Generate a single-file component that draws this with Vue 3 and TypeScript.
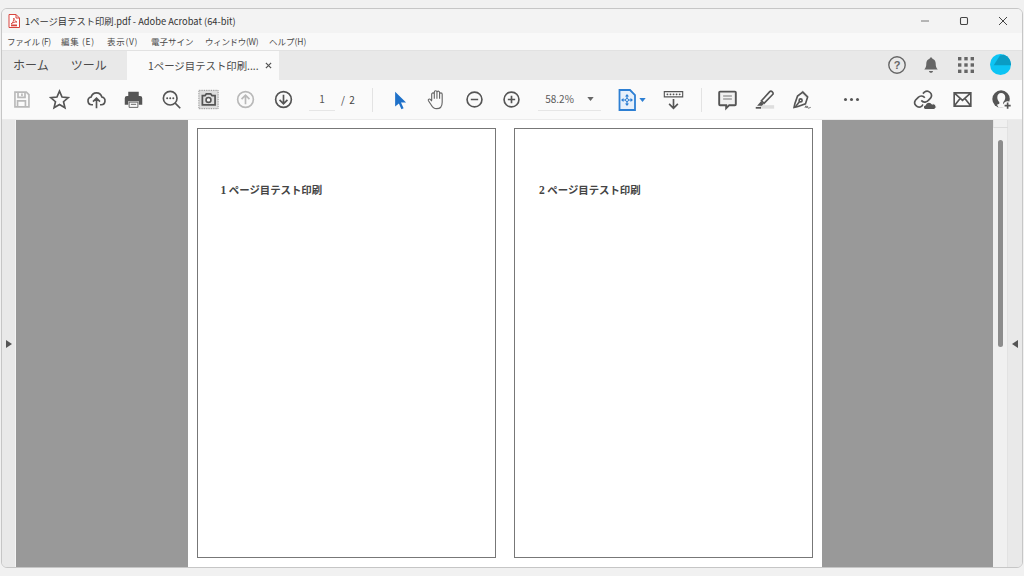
<script setup lang="ts">
const menus: { label: string; width: number; spacing: number }[] = [
  { label: 'ファイル (F)', width: 54, spacing: -0.3 },
  { label: '編集 (E)', width: 46, spacing: 0.7 },
  { label: '表示(V)', width: 44, spacing: 0.7 },
  { label: '電子サイン', width: 54, spacing: 0 },
  { label: 'ウィンドウ(W)', width: 64, spacing: -0.3 },
  { label: 'ヘルプ(H)', width: 50, spacing: 0 },
]
const pages: { n: number; label: string }[] = [
  { n: 1, label: 'ページ目テスト印刷' },
  { n: 2, label: 'ページ目テスト印刷' },
]
</script>

<template>
  <div class="window">
    <header class="titlebar">
      <svg class="pdf" viewBox="0 0 12 14" width="12" height="14">
        <path d="M1 .5h7l3.500 3.500v9.500H1z" fill="#fff" stroke="#d8453e" />
        <path d="M8 .5V4h3.500" fill="none" stroke="#d8453e" />
        <path d="M3 10c2-1 3-4 2.800-6 .4 2 1.400 3.500 3.200 4-2-.2-4 .5-6 2z" fill="none" stroke="#d8453e" stroke-width=".9" />
        <rect x="3" y="10.500" width="6" height="1.800" fill="#d8453e" />
      </svg>
      <span class="title">1ページ目テスト印刷.pdf - Adobe Acrobat (64-bit)</span>
      <div class="winbtns">
        <svg viewBox="0 0 10 10" width="10" height="10"><path d="M1 5h8" stroke="#777" stroke-width="1" /></svg>
        <svg viewBox="0 0 10 10" width="10" height="10"><rect x="1.500" y="1.500" width="7" height="7" rx="1.200" fill="none" stroke="#444" stroke-width="1.100" /></svg>
        <svg viewBox="0 0 10 10" width="10" height="10"><path d="M1 1l8 8M9 1l-8 8" stroke="#444" stroke-width="1" /></svg>
      </div>
    </header>

    <nav class="menubar">
      <span v-for="m in menus" :key="m.label" :style="{ width: m.width + 'px', letterSpacing: m.spacing + 'px' }">{{ m.label }}</span>
    </nav>

    <div class="tabbar">
      <span class="tab-plain tab-home">ホーム</span>
      <span class="tab-plain tab-tools">ツール</span>
      <div class="tab-doc">
        <span>1ページ目テスト印刷....</span>
        <svg viewBox="0 0 8 8" width="7" height="7"><path d="M1 1l6 6M7 1l-6 6" stroke="#555" stroke-width="1.400" /></svg>
      </div>
      <div class="tab-right">
        <span class="tr-item">
          <svg viewBox="0 0 20 20" width="20" height="20">
            <circle cx="10" cy="10" r="8.200" fill="none" stroke="#666" stroke-width="1.400" />
            <text x="10" y="14" text-anchor="middle" class="q">?</text>
          </svg>
        </span>
        <span class="tr-item">
          <svg viewBox="0 0 20 20" width="20" height="20">
            <path d="M10 2.500c.8 0 1.300.5 1.400 1.200 2.200.6 3.300 2.500 3.300 4.800 0 3 .6 4.500 2 6H3.300c1.400-1.500 2-3 2-6 0-2.300 1.100-4.200 3.300-4.800.1-.7.600-1.200 1.400-1.200z" fill="#666" />
            <path d="M8 16h4c0 1-.9 1.800-2 1.800S8 17 8 16z" fill="#666" />
          </svg>
        </span>
        <span class="tr-item">
          <svg viewBox="0 0 18 18" width="18" height="18" fill="#666">
            <rect x="1" y="1" width="3.400" height="3.400" /><rect x="7.300" y="1" width="3.400" height="3.400" /><rect x="13.600" y="1" width="3.400" height="3.400" />
            <rect x="1" y="7.300" width="3.400" height="3.400" /><rect x="7.300" y="7.300" width="3.400" height="3.400" /><rect x="13.600" y="7.300" width="3.400" height="3.400" />
            <rect x="1" y="13.600" width="3.400" height="3.400" /><rect x="7.300" y="13.600" width="3.400" height="3.400" /><rect x="13.600" y="13.600" width="3.400" height="3.400" />
          </svg>
        </span>
        <span class="tr-item">
          <svg viewBox="0 0 20 20" width="21" height="21">
            <circle cx="10" cy="10" r="10" fill="#0cc4f4" />
            <path d="M9.500 1.500L13 .6A10 10 0 0 1 20 10.700H3.500z" fill="#0a9cc4" />
          </svg>
        </span>
      </div>
    </div>

    <div class="toolbar">
      <span class="ti dis">
        <svg viewBox="0 0 24 24"><path d="M4.500 3.500h13l3 3v14h-16z M8 3.500v6h8v-6 M7.500 20.500v-7h9v7 M12.500 5v3" /></svg>
      </span>
      <span class="ti">
        <svg viewBox="0 0 24 24"><path d="M12 2.500l2.900 6.600 7.100.7-5.400 4.700 1.600 7-6.200-3.700-6.200 3.700 1.600-7L2 9.800l7.100-.7z" /></svg>
      </span>
      <span class="ti">
        <svg viewBox="0 0 24 24"><path d="M8 18H6.500a4.500 4.500 0 0 1-.6-8.900 6.300 6.300 0 0 1 12.200 0 4.500 4.500 0 0 1-.6 8.900H16 M12 22V11 M8 14.500l4-4 4 4" /></svg>
      </span>
      <span class="ti">
        <svg viewBox="0 0 24 24">
          <path class="fill" d="M6 3h12v5H6z" />
          <path class="fill" d="M4.500 8h15A2.500 2.500 0 0 1 22 10.500V18h-4v-4H6v4H2v-7.500A2.500 2.500 0 0 1 4.500 8z" />
          <path class="thin" d="M7 15h10v6H7z M9 17.500h6" />
        </svg>
      </span>
      <span class="ti">
        <svg viewBox="0 0 24 24">
          <circle cx="10.500" cy="10.500" r="7.800" />
          <path d="M16.200 16.200L22 22" />
          <path class="dots" d="M7 10.500h.1M10.500 10.500h.1M14 10.500h.1" />
        </svg>
      </span>
      <span class="ti">
        <svg viewBox="0 0 24 24">
          <rect class="dash" x="1" y="1.500" width="22" height="21" />
          <path class="camera" d="M5 7.500h3l1.500-1.800h5L16 7.500h3.500v10.500H5z" />
          <circle class="lens" cx="12" cy="12.500" r="2.800" />
        </svg>
      </span>
      <span class="ti dis">
        <svg viewBox="0 0 24 24"><circle cx="12" cy="12" r="9" /><path d="M12 17.500V7 M7.500 11.500L12 7l4.500 4.500" /></svg>
      </span>
      <span class="ti">
        <svg viewBox="0 0 24 24"><circle cx="12" cy="12" r="9" /><path d="M12 6.500V17 M7.500 12.500L12 17l4.500-4.500" /></svg>
      </span>

      <div class="pager">
        <span class="page-no">1</span>
        <span class="page-of">/&nbsp; 2</span>
      </div>
      <i class="sep sep-a"></i>

      <span class="ti ti-first">
        <svg viewBox="0 0 24 24"><path class="blue" d="M7 3l12.500 12.500h-5.800l3 6.500-2.500 1-2.900-6.500L7 20z" /></svg>
      </span>
      <span class="ti ti-hand">
        <svg viewBox="0 0 24 24"><path d="M6.500 13V6a1.500 1.500 0 0 1 3 0v5 M9.500 11V3.500a1.500 1.500 0 0 1 3 0V11 M12.500 11V4a1.500 1.500 0 0 1 3 0v7 M15.500 11V6a1.500 1.500 0 0 1 3 0v9c0 4.500-2.500 7.500-6.500 7.500-3.200 0-4.800-2-6-4.300L2.800 13.500c-.8-1.500 1.200-2.800 2.300-1.500l1.400 2" /></svg>
      </span>
      <span class="ti">
        <svg viewBox="0 0 24 24"><circle cx="12" cy="12" r="8.500" /><path d="M7.800 12h8.400" /></svg>
      </span>
      <span class="ti">
        <svg viewBox="0 0 24 24"><circle cx="12" cy="12" r="8.500" /><path d="M7.800 12h8.400 M12 7.800v8.400" /></svg>
      </span>

      <div class="zoom">
        <span>58.2%</span>
        <svg viewBox="0 0 8 5" width="7" height="4"><path d="M0 0h8L4 5z" fill="#666" /></svg>
      </div>

      <span class="fit">
        <svg viewBox="0 0 24 24" width="24" height="24">
          <path d="M4.500 2h10.500l5 5v15H4.500z" fill="#e6f0fb" stroke="#2d7fd3" stroke-width="1.800" />
          <path d="M12 7v10M7 12h10" stroke="#2d7fd3" stroke-width="1.200" />
          <path d="M12 6l-2 2.500h4zM12 18l-2-2.500h4zM6 12l2.500-2v4zM18 12l-2.500-2v4z" fill="#2d7fd3" />
          <circle cx="12" cy="12" r="1.500" fill="#fff" stroke="#2d7fd3" />
        </svg>
        <svg viewBox="0 0 8 5" width="7" height="4"><path d="M0 0h8L4 5z" fill="#2d7fd3" /></svg>
      </span>

      <span class="ti ti-scan">
        <svg viewBox="0 0 24 24">
          <path class="band" d="M1.500 3h21v6h-21z" />
          <path class="dots2" d="M5 6h.1M8.500 6h.1M12 6h.1M15.500 6h.1M19 6h.1" />
          <path d="M12 11.500V22 M7 17l5 5 5-5" />
        </svg>
      </span>
      <i class="sep sep-b"></i>

      <span class="ti ti-comment">
        <svg viewBox="0 0 24 24"><path class="bubble" d="M3.500 3h17a1 1 0 0 1 1 1v13.500a1 1 0 0 1-1 1H14l-3.500 3.500v-3.500h-7a1 1 0 0 1-1-1V4a1 1 0 0 1 1-1z" /><path class="thin3" d="M7 8h10 M7 11.500h10" /></svg>
      </span>
      <span class="ti">
        <svg viewBox="0 0 24 24">
          <rect class="pale" x="7" y="18.500" width="16" height="4" />
          <path d="M8.500 13.500L18 3a1.800 1.800 0 0 1 2.600 0l.7.7a1.800 1.800 0 0 1 0 2.600L11.500 16.500z" />
          <path class="fill" d="M8 14l3 3-2 2H3.500z" />
          <rect class="fill" x="2" y="20.500" width="6" height="2" />
        </svg>
      </span>
      <span class="ti">
        <svg viewBox="0 0 24 24">
          <path class="pale" d="M13 1l7 7-3 2-6-6z" />
          <path d="M13.500 3.500l5.500 5.500-2.500 8-8.500 3-4.500 1 1-4.500 3-8.500z" />
          <circle cx="11" cy="13" r="1.700" />
          <path d="M5 20.500L9.800 14.200" />
          <path class="thin" d="M16 21.500c1-3 1.500-3 1.500-.5 0 1.500 1.500-3 1.500-.5s1.500 1 3.500.5" />
        </svg>
      </span>
      <span class="more"><b></b><b></b><b></b></span>

      <span class="ti ti-link">
        <svg viewBox="0 0 24 24">
          <path d="M9.500 13a5 5 0 0 0 7.500.5l3-3a5 5 0 0 0-7-7l-1.700 1.700" />
          <path d="M13.500 10a5 5 0 0 0-7.500-.5l-3 3a5 5 0 0 0 7 7l1.700-1.700" />
          <path class="cloud" d="M14 23.500a2.700 2.700 0 0 1 0-5.300 4.400 4.400 0 0 1 8-1 3.200 3.200 0 0 1 2.300 6.300z" />
        </svg>
      </span>
      <span class="ti ti-mail">
        <svg viewBox="0 0 24 24"><path d="M2.500 4.500h19v15h-19z M2.500 4.500l9.500 8.500 9.500-8.500 M2.500 19.500l7-9 M21.500 19.500l-7-9" /></svg>
      </span>
      <span class="ti ti-user">
        <svg viewBox="0 0 24 24">
          <circle class="fill" cx="11.500" cy="11.500" r="10" />
          <path class="hole" d="M11.500 4.500c3 0 4.800 2 4.800 5 0 2.500-1 4.400-2.300 5.300V17c1 .3 2 .8 2.800 1.500l-1 3-7 0 -2-3.500c.8-.5 1.700-.9 2.700-1.100v-2c-1.300-1-2.300-2.900-2.300-5.400 0-3 1.800-5 4.300-5z" />
          <circle class="cut" cx="19" cy="19" r="5" />
          <path d="M19 15.500v7 M15.500 19h7" />
        </svg>
      </span>
    </div>

    <main class="body">
      <aside class="side side-left">
        <svg viewBox="0 0 6 8" width="6" height="8"><path d="M0 0l6 4-6 4z" fill="#555" /></svg>
      </aside>
      <div class="canvas">
        <div class="sheet">
          <section v-for="p in pages" :key="p.n" class="page">
            <p><span class="num">{{ p.n }}</span> {{ p.label }}</p>
          </section>
        </div>
      </div>
      <div class="scroll">
        <div class="scroll-cap"></div>
        <div class="thumb"></div>
      </div>
      <aside class="side side-right">
        <svg viewBox="0 0 6 8" width="6" height="8"><path d="M6 0L0 4l6 4z" fill="#555" /></svg>
      </aside>
    </main>
  </div>
</template>

<style scoped>
.window {
  box-sizing: border-box;
  width: 1022px;
  height: 560px;
  margin: 8px 0 0 1px;
  border: 1px solid #c6c6c6;
  border-radius: 6px;
  overflow: hidden;
  display: flex;
  flex-direction: column;
  background: #f3f3f3;
  font-family: "Noto Sans CJK JP", "Noto Sans", sans-serif;
  color: #333;
}
.titlebar {
  height: 24px;
  flex: none;
  display: flex;
  align-items: center;
  padding-left: 6px;
  background: #f3f3f3;
}
.pdf { flex: none; }
.title { margin-left: 5px; font-size: 9.300px; color: #333; }
.winbtns {
  margin-left: auto;
  display: flex;
  gap: 29px;
  padding-right: 14px;
  align-items: center;
}
.menubar {
  height: 17px;
  flex: none;
  box-sizing: border-box;
  background: #f9f9f9;
  display: flex;
  align-items: center;
  padding: 0 0 2px 5px;
  font-size: 8.500px;
  color: #4a4a4a;
}
.menubar span { flex: none; white-space: nowrap; }
.tabbar {
  height: 30px;
  flex: none;
  display: flex;
  align-items: stretch;
  background: #e9e9e9;
  border-top: 1px solid #e2e2e2;
  box-sizing: border-box;
}
.tab-plain {
  font-size: 12px;
  line-height: 27px;
  color: #4b4b4b;
}
.tab-home { margin-left: 11px; }
.tab-tools { margin-left: 22px; }
.tab-doc {
  margin-left: 20px;
  width: 152px;
  background: #fafafa;
  display: flex;
  align-items: center;
  justify-content: flex-end;
  gap: 6px;
  font-size: 10.400px;
  color: #4b4b4b;
  padding: 0 7px 1px 0;
  box-sizing: border-box;
}
.tab-right { margin-left: auto; display: flex; align-items: center; padding: 0 4px 2px 0; }
.tr-item { width: 34.700px; display: flex; justify-content: center; }
.toolbar {
  height: 39px;
  flex: none;
  background: #fafafa;
  border-bottom: 1px solid #ececec;
  display: flex;
  align-items: center;
  padding-left: 1.300px;
}
.ti {
  width: 37.330px;
  height: 24px;
  flex: none;
  display: flex;
  justify-content: center;
  align-items: center;
}
.ti svg {
  width: 21px;
  height: 21px;
  fill: none;
  stroke: #555;
  stroke-width: 1.900;
  overflow: visible;
}
.ti.dis svg { stroke: #b9b9b9; }
.ti-hand svg { stroke-width: 1.300; stroke: #666; }
.ti .fill { fill: #555; stroke: none; }
.ti .thin { stroke-width: 1; fill: #fafafa; }
.ti .band { stroke-width: 1.300; }
.ti .dots { stroke-width: 2.200; stroke-linecap: round; }
.ti .dots2 { stroke-width: 2; stroke-linecap: round; }
.ti .dash { fill: #dedede; stroke: #777; stroke-width: 1; stroke-dasharray: 1 1; }
.ti .camera { fill: #dedede; stroke: #555; stroke-width: 2; }
.ti .lens { fill: #fafafa; stroke: #555; stroke-width: 1.800; }
.ti .blue { fill: #1f71c9; stroke: none; }
.ti .pale { fill: #dedede; stroke: none; }
.ti .bubble { fill: #f1f1f1; stroke-width: 2.200; }
.ti .thin3 { stroke-width: 1.200; stroke: #777; }
.ti .cloud { fill: #555; stroke: #fafafa; stroke-width: 1.300; }
.ti .hole { fill: #fafafa; stroke: none; }
.ti .cut { fill: #fafafa; stroke: none; }
.pager {
  width: 65px;
  flex: none;
  display: flex;
  align-items: center;
  font-size: 10px;
  color: #444;
}
.page-no {
  width: 26px;
  margin-left: 7px;
  text-align: center;
  border-bottom: 1px solid #e6e6e6;
  line-height: 22px;
  color: #555;
}
.page-of { margin-left: 6px; }
.sep {
  width: 1px;
  height: 24px;
  flex: none;
  background: #e3e3e3;
}
.sep-a { margin-left: 5px; }
.ti-first { margin-left: 8px; }
.zoom {
  width: 63px;
  margin-left: 8px;
  flex: none;
  display: flex;
  align-items: center;
  justify-content: space-between;
  box-sizing: border-box;
  padding: 0 7px;
  font-size: 10px;
  color: #5a5a5a;
  line-height: 22px;
  border-bottom: 1px solid #e6e6e6;
}
.fit {
  flex: none;
  width: 32px;
  margin-left: 14px;
  display: flex;
  align-items: center;
}
.ti-scan { margin-left: 8px; }
.sep-b { margin-left: 8px; }
.ti-comment { margin-left: 7px; }
.more {
  width: 60px;
  flex: none;
  margin-left: 1px;
  display: flex;
  justify-content: center;
  gap: 3px;
}
.more b {
  width: 3px;
  height: 3px;
  border-radius: 50%;
  background: #555;
}
.ti-link { margin-left: 23px; }
.ti-mail { margin-left: 2px; }
.ti-user { margin-left: 2px; }
.body {
  flex: 1;
  min-height: 0;
  display: flex;
}
.side {
  flex: none;
  width: 14px;
  box-sizing: border-box;
  background: #e9e9e9;
  display: flex;
  align-items: center;
  justify-content: center;
}
.side-left { border-right: 1px solid #f4f4f4; }
.canvas {
  flex: 1;
  background: #999;
  display: flex;
  justify-content: center;
  min-width: 0;
}
.sheet {
  width: 634px;
  background: #fff;
  box-sizing: border-box;
  padding: 8px 9px 9px;
  display: flex;
  gap: 18px;
}
.page {
  flex: 1;
  border: 1px solid #777;
  box-sizing: border-box;
}
.page p {
  margin: 54px 0 0 23px;
  font-size: 10.400px;
  font-weight: 700;
  color: #444;
  font-family: "Liberation Serif", "Noto Sans CJK JP", serif;
  line-height: 14px;
}
.page:last-child p { margin-left: 24.500px; }
.num { font-size: 11.500px; }
.scroll {
  flex: none;
  width: 15px;
  background: #f0f0f0;
  border-right: 1px solid #e2e2e2;
  box-sizing: border-box;
  display: flex;
  flex-direction: column;
  align-items: center;
}
.scroll-cap {
  width: 100%;
  height: 7px;
  border-bottom: 1px solid #dcdcdc;
  border-left: 1px solid #e6e6e6;
}
.thumb {
  margin-top: 12px;
  width: 5px;
  height: 207px;
  border-radius: 3px;
  background: #8c8c8c;
}
</style>

<style>
html, body { margin: 0; background: #f1f1f1; }
.q { font: 700 11px "Liberation Sans", sans-serif; fill: #666; }
</style>
